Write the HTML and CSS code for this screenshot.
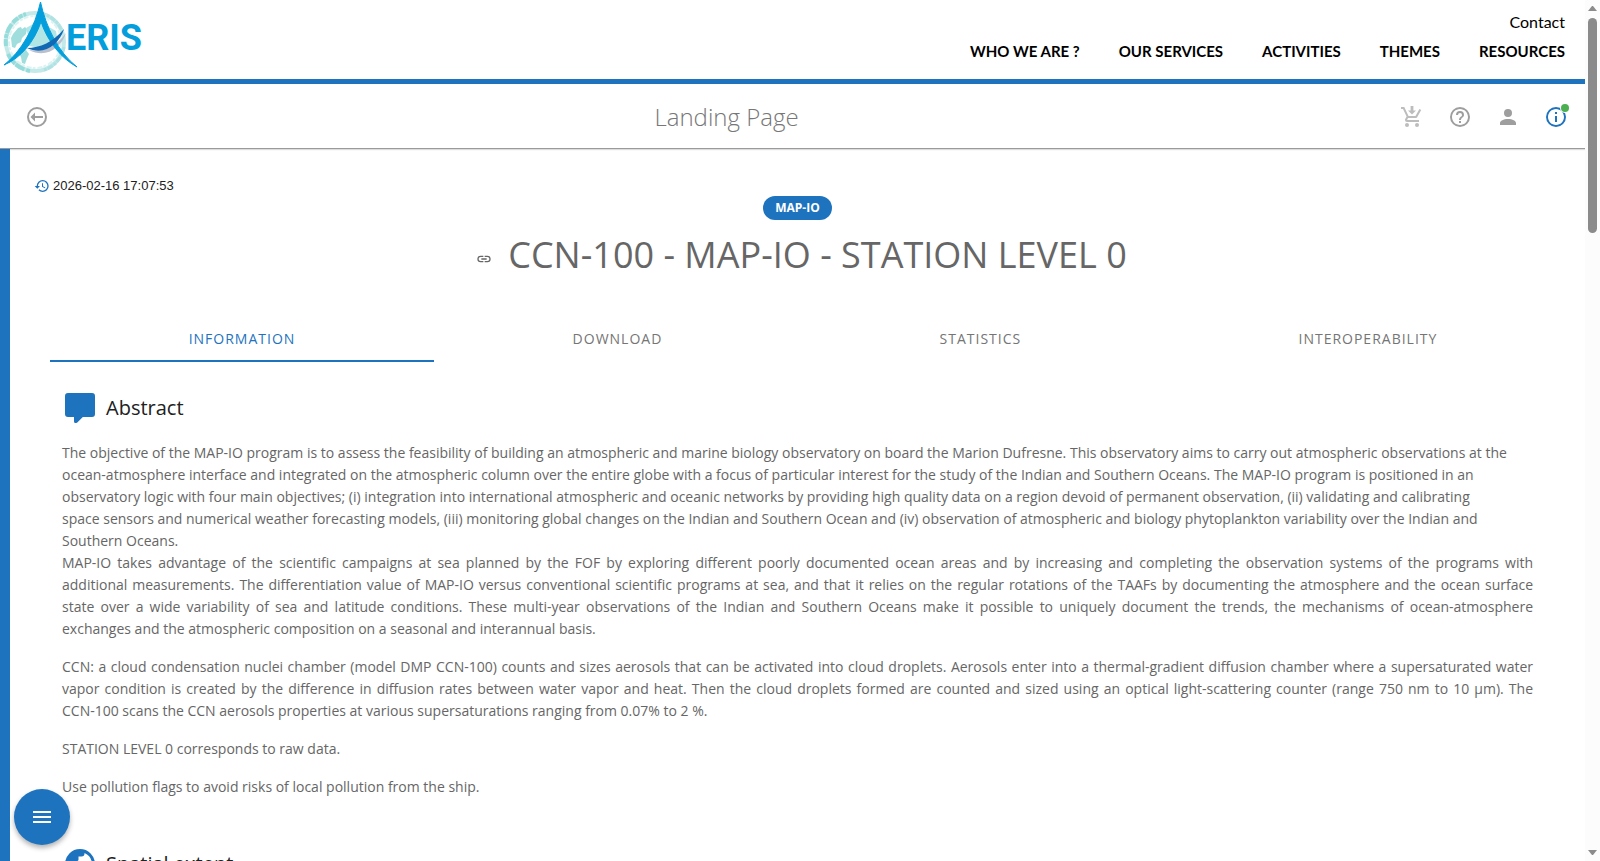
FILE: index.html
```html
<!DOCTYPE html>
<html lang="en">
<head>
<meta charset="utf-8">
<title>CCN-100 - MAP-IO - STATION LEVEL 0</title>
<link rel="stylesheet" href="styles.css">
</head>
<body>
<div class="app">
  <div class="page">
    <header class="site-header">
      <a class="logo" href="#" aria-label="AERIS home">
        <svg class="logo-mark" viewBox="0 0 160 76" aria-hidden="true">
          <circle cx="35" cy="42" r="29" fill="none" stroke="#c3e9e9" stroke-width="4"/>
          <path d="M6 46A29 29 0 0 1 26 14M8 54A29 29 0 0 0 30 71" fill="none" stroke="#96dcda" stroke-width="4" stroke-dasharray="7 1 4 1 10 2"/>
          <path d="M40 13A29 29 0 0 1 62 31M64 47A29 29 0 0 1 44 70" fill="none" stroke="#b0e2e4" stroke-width="3" stroke-dasharray="6 1 3 1"/>
          <circle cx="35" cy="42" r="26" fill="none" stroke="#dcf3f3" stroke-width="2" stroke-dasharray="5 2 3 1"/>
          <path d="M11 38l2-4 5-6 3-1 1 2 3-2 2 2-1 5-4 4-1 4-4 2-2 4-3-1zM18 50l8 0 3 4-3 7-1 3-3-1-1-6-3-4z" fill="#a0dedd"/>
          <path d="M26 28l9-5 12 3 9 5 1 6-8 7-9 4-11-2-3-6 2-5z" fill="#b2e6e6"/>
          <path d="M29 50c13 2 26-2 37-17-5 15-20 26-37 17z" fill="#b9bfcd"/>
          <path d="M4 65C21 52 35 27 40.500 2 46 27 58 52 77 67 61 58 48 42 41 22 34 42 21 58 4 65z" fill="#039edb" stroke="#039edb" stroke-width="1"/>
          <path d="M27 48c13 0 26-6 37-19-5 16-20 27-37 19z" fill="#1268b3"/>
          <text class="logo-text" x="66" y="50">ERIS</text>
        </svg>
      </a>
      <div class="site-nav">
        <a class="contact" href="#">Contact</a>
        <nav class="menu" aria-label="Main">
          <a href="#">WHO WE ARE ?</a>
          <a href="#">OUR SERVICES</a>
          <a href="#">ACTIVITIES</a>
          <a href="#">THEMES</a>
          <a href="#">RESOURCES</a>
        </nav>
      </div>
    </header>

    <div class="toolbar">
      <button class="icon-btn icon-btn-wide" aria-label="Back">
        <svg class="icon" viewBox="0 0 24 24"><path d="M18 11v2h-8v3.500L5.500 12 10 7.500V11zM2 12A10 10 0 1 1 22 12 10 10 0 0 1 2 12m2 0a8 8 0 1 0 16 0 8 8 0 0 0-16 0"/></svg>
      </button>
      <h2 class="toolbar-title">Landing Page</h2>
      <div class="toolbar-actions">
        <button class="icon-btn icon-btn-light" aria-label="Cart">
          <svg class="icon" viewBox="0 0 24 24"><path d="M9 20a2 2 0 0 1-4 0 2 2 0 0 1 4 0m8-2a2 2 0 1 0 0 4 2 2 0 0 0 0-4m-9.800-3.400v-.1l.9-1.500h7.500c.7 0 1.400-.4 1.700-1l3.900-7L19.400 4l-3.900 7h-7L4.300 2H1v2h2l3.600 7.600L5.200 14c-.1.300-.2.600-.2 1a2 2 0 0 0 2 2h12v-2H7.400c-.1 0-.2-.2-.2-.4M12 9.500l4-4h-2.600V1h-2.800v4.500H8z"/></svg>
        </button>
        <button class="icon-btn" aria-label="Help">
          <svg class="icon" viewBox="0 0 24 24"><path d="M11 18h2v-2h-2zm1-16A10 10 0 0 0 2 12a10 10 0 0 0 10 10 10 10 0 0 0 10-10A10 10 0 0 0 12 2m0 18c-4.410 0-8-3.590-8-8s3.590-8 8-8 8 3.590 8 8-3.590 8-8 8m0-14a4 4 0 0 0-4 4h2a2 2 0 0 1 2-2 2 2 0 0 1 2 2c0 2-3 1.750-3 5h2c0-2.250 3-2.500 3-5a4 4 0 0 0-4-4"/></svg>
        </button>
        <button class="icon-btn" aria-label="Account">
          <svg class="icon" viewBox="0 0 24 24"><path d="M12 4a4 4 0 0 1 4 4 4 4 0 0 1-4 4 4 4 0 0 1-4-4 4 4 0 0 1 4-4m0 10c4.420 0 8 1.790 8 4v2H4v-2c0-2.210 3.580-4 8-4"/></svg>
        </button>
        <button class="icon-btn icon-btn-primary" aria-label="Information">
          <svg class="icon" viewBox="0 0 24 24"><path d="M11 9h2V7h-2m1 13c-4.410 0-8-3.590-8-8s3.590-8 8-8 8 3.590 8 8-3.590 8-8 8m0-18A10 10 0 0 0 2 12a10 10 0 0 0 10 10 10 10 0 0 0 10-10A10 10 0 0 0 12 2m-1 15h2v-6h-2z"/></svg>
          <span class="status-dot"></span>
        </button>
      </div>
    </div>

    <main class="content">
      <p class="updated">
        <svg class="icon icon-xs" viewBox="0 0 24 24"><path d="M13.500 8H12v5l4.280 2.540.72-1.210-3.500-2.080zM13 3a9 9 0 0 0-9 9H1l3.960 4.030L9 12H6a7 7 0 0 1 7-7 7 7 0 0 1 7 7 7 7 0 0 1-7 7c-1.930 0-3.680-.79-4.940-2.060l-1.420 1.420A8.900 8.900 0 0 0 13 21a9 9 0 0 0 9-9 9 9 0 0 0-9-9"/></svg>
        <time>2026-02-16 17:07:53</time>
      </p>
      <div class="heading">
        <span class="chip">MAP-IO</span>
        <div class="title-row">
          <a class="permalink" href="#" aria-label="Permalink">
            <svg class="icon icon-xs" viewBox="0 0 24 24"><path d="M3.900 12A3.100 3.100 0 0 1 7 8.900h4V7H7a5 5 0 0 0-5 5 5 5 0 0 0 5 5h4v-1.900H7A3.100 3.100 0 0 1 3.900 12M8 13h8v-2H8zm9-6h-4v1.900h4a3.100 3.100 0 0 1 0 6.200h-4V17h4a5 5 0 0 0 5-5 5 5 0 0 0-5-5"/></svg>
          </a>
          <h1 class="title">CCN-100 - MAP-IO - STATION LEVEL 0</h1>
        </div>
      </div>

      <div class="tabs" role="tablist">
        <button class="tab tab-active" role="tab" aria-selected="true">INFORMATION</button>
        <button class="tab" role="tab">DOWNLOAD</button>
        <button class="tab" role="tab">STATISTICS</button>
        <button class="tab" role="tab">INTEROPERABILITY</button>
      </div>

      <div class="sections">
        <section class="section">
          <h3 class="section-title">
            <svg class="icon icon-lg" viewBox="0 0 24 24"><path d="M9 22a1 1 0 0 1-1-1v-3H4a2 2 0 0 1-2-2V4a2 2 0 0 1 2-2h16a2 2 0 0 1 2 2v12a2 2 0 0 1-2 2h-6.100l-3.700 3.710c-.2.190-.45.290-.7.290z"/></svg>
            Abstract
          </h3>
          <div class="abstract">
            <div class="intro">The objective of the MAP-IO program is to assess the feasibility of building an atmospheric and marine biology observatory on board the Marion Dufresne. This observatory aims to carry out atmospheric observations at the ocean-atmosphere interface and integrated on the atmospheric column over the entire globe with a focus of particular interest for the study of the Indian and Southern Oceans. The MAP-IO program is positioned in an observatory logic with four main objectives; (i) integration into international atmospheric and oceanic networks by providing high quality data on a region devoid of permanent observation, (ii) validating and calibrating space&nbsp;sensors and numerical weather forecasting models, (iii) monitoring global changes on the Indian and Southern Ocean and (iv) observation of atmospheric and biology phytoplankton variability over the Indian and Southern&nbsp;Oceans.</div>
            <p>MAP-IO takes advantage of the scientific campaigns at sea planned by the FOF by exploring different poorly documented ocean areas and by increasing and completing the observation systems of the programs with additional&nbsp;measurements. The differentiation value of MAP-IO versus conventional scientific programs at sea, and that it relies on the regular rotations of the TAAFs by documenting the atmosphere and the ocean surface state&nbsp;over&nbsp;a&nbsp;wide variability of sea and latitude conditions. These multi-year observations of the Indian and Southern Oceans make it possible to uniquely document the trends, the mechanisms of ocean-atmosphere exchanges&nbsp;and&nbsp;the atmospheric composition on a seasonal and interannual basis.</p>
            <p>CCN: a cloud condensation nuclei chamber (model DMP CCN-100) counts and sizes aerosols that can be activated into cloud droplets. Aerosols enter into a thermal-gradient diffusion chamber where a supersaturated water vapor condition is created by the difference in diffusion rates between water vapor and heat. Then the cloud droplets formed are counted and sized using an optical light-scattering counter (range 750 nm to 10 µm). The <span class="nowrap">CCN-100</span> scans the CCN aerosols properties at various supersaturations ranging from 0.07% to 2 %.</p>
            <p>STATION LEVEL 0 corresponds to raw data.</p>
            <p>Use pollution flags to avoid risks of local pollution from the ship.</p>
          </div>
        </section>
        <section class="section">
          <h3 class="section-title">
            <svg class="icon icon-lg" viewBox="0 0 24 24"><path d="M17.900 17.390c-.26-.8-1.010-1.390-1.900-1.390h-1v-3a1 1 0 0 0-1-1H8v-2h2a1 1 0 0 0 1-1V7h2a2 2 0 0 0 2-2v-.41a7.980 7.980 0 0 1 2.900 12.800M11 19.930c-3.950-.49-7-3.850-7-7.930 0-.62.080-1.220.21-1.790L9 15v1a2 2 0 0 0 2 2m1-16A10 10 0 0 0 2 12a10 10 0 0 0 10 10 10 10 0 0 0 10-10A10 10 0 0 0 12 2"/></svg>
            Spatial extent
          </h3>
        </section>
      </div>
    </main>

    <button class="fab" aria-label="Menu">
      <svg class="icon" viewBox="0 0 24 24"><path d="M3 6h18v2H3zm0 5h18v2H3zm0 5h18v2H3z"/></svg>
    </button>
  </div>

  <div class="scrollbar" aria-hidden="true">
    <svg class="scroll-arrow" viewBox="0 0 9 5"><path d="M0 5L4 0H5L9 5z"/></svg>
    <div class="scroll-track"><div class="scroll-thumb"></div></div>
    <svg class="scroll-arrow" viewBox="0 0 9 5"><path d="M0 0L4 5H5L9 0z"/></svg>
  </div>
</div>
</body>
</html>
```
FILE: styles.css
```css
:root {
  --primary: #1e73be;
  --muted: #666;
  --icon: #9e9e9e;
}

* {
  box-sizing: border-box;
}

body {
  margin: 0;
  background: #fff;
  color: #212121;
  font-family: "Open Sans", "Noto Sans", sans-serif;
  font-size: 14px;
  line-height: 22px;
}

h1, h2, h3, p {
  margin: 0;
  font-weight: 400;
}

a {
  color: inherit;
  text-decoration: none;
}

button {
  padding: 0;
  border: 0;
  background: none;
  color: inherit;
  font: inherit;
  cursor: pointer;
}

.nowrap {
  white-space: nowrap;
}

.app {
  display: flex;
  height: 100vh;
  overflow: hidden;
}

.page {
  flex: 1;
  min-width: 0;
  display: flex;
  flex-direction: column;
}

.icon {
  display: block;
  flex: none;
  width: 24px;
  height: 24px;
  fill: currentColor;
}

.icon-xs {
  width: 16px;
  height: 16px;
}

.icon-lg {
  width: 36px;
  height: 36px;
  color: var(--primary);
}

.site-header {
  flex: none;
  display: flex;
  justify-content: space-between;
  border-bottom: 5px solid var(--primary);
}

.logo {
  padding-bottom: 3px;
}

.logo-mark {
  display: block;
  width: 160px;
  height: 76px;
}

.logo-text {
  font-family: Roboto, sans-serif;
  font-size: 36px;
  font-weight: 700;
  fill: #039edb;
}

.site-nav {
  display: flex;
  flex-direction: column;
  align-items: flex-end;
  gap: 7px;
  padding: 11px 20px 0;
  color: #000;
  font-family: Lato, sans-serif;
}

.contact {
  font-size: 16px;
}

.menu {
  display: flex;
  gap: 39px;
  font-size: 15px;
  font-weight: 700;
}

.toolbar {
  flex: none;
  display: flex;
  align-items: center;
  justify-content: space-between;
  height: 65px;
  padding: 2px 9px 0 13px;
  border-bottom: 1px solid #9a9a9a;
  box-shadow: 0 1px 1px #ddd;
  color: var(--icon);
}

.toolbar-title {
  color: #777;
  font-size: 24px;
  font-weight: 300;
  line-height: 32px;
}

.toolbar-actions {
  display: flex;
  gap: 8px;
}

.icon-btn {
  position: relative;
  display: grid;
  place-items: center;
  width: 40px;
  height: 40px;
}

.icon-btn-wide {
  width: 48px;
}

.icon-btn-light {
  color: #bdbdbd;
}

.icon-btn-primary {
  color: var(--primary);
}

.status-dot {
  position: absolute;
  top: 7px;
  right: 7px;
  width: 8px;
  height: 8px;
  border-radius: 50%;
  background: #4caf50;
  box-shadow: 0 0 0 1px #fff;
}

.content {
  flex: 1;
  min-height: 0;
  overflow: hidden;
  border-left: 10px solid var(--primary);
  padding: 27px 9px 0 24px;
}

.updated {
  display: flex;
  align-items: center;
  gap: 3px;
  font-family: "Liberation Sans", Arial, sans-serif;
  font-size: 13px;
  line-height: 20px;
}

.updated .icon {
  color: var(--primary);
}

.heading {
  display: flex;
  flex-direction: column;
  align-items: center;
  gap: 8px;
  padding-right: 15px;
  color: var(--muted);
}

.chip {
  padding: 0 12px;
  border-radius: 12px;
  background: var(--primary);
  color: #fff;
  font-size: 12px;
  font-weight: 700;
  line-height: 24px;
}

.title-row {
  display: flex;
  align-items: center;
  gap: 16px;
}

.permalink {
  padding: 8px 0 0 8px;
}

.title {
  font-size: 36px;
  line-height: 54px;
}

.tabs {
  display: flex;
  margin-top: 36px;
  margin-left: 16px;
}

.tab {
  flex: 1 1 auto;
  height: 44px;
  border-bottom: 2px solid transparent;
  color: #757575;
  letter-spacing: 1px;
}

.tab-active {
  border-color: var(--primary);
  color: var(--primary);
}

.sections {
  display: flex;
  flex-direction: column;
  gap: 48px;
  padding: 28px 43px 0 28px;
}

.section-title {
  display: flex;
  align-items: center;
  gap: 8px;
  font-size: 20px;
  font-weight: 500;
  line-height: 32px;
}

.abstract {
  margin-top: 16px;
  color: var(--muted);
}

.abstract p {
  text-align: justify;
}

.abstract p + p {
  margin-top: 16px;
}

.fab {
  position: fixed;
  bottom: 16px;
  left: 14px;
  display: grid;
  place-items: center;
  width: 56px;
  height: 56px;
  border-radius: 50%;
  background: var(--primary);
  color: #fff;
  box-shadow: 0 3px 5px rgba(0, 0, 0, .3);
}

.scrollbar {
  flex: none;
  display: flex;
  flex-direction: column;
  align-items: center;
  width: 15px;
  padding: 6px 0;
  background: #fcfcfc;
}

.scroll-arrow {
  width: 9px;
  height: 5px;
  fill: #8b8b8b;
}

.scroll-track {
  flex: 1;
  padding: 7px 0;
}

.scroll-thumb {
  width: 9px;
  height: 26%;
  border-radius: 5px;
  background: #8b8b8b;
}
```
